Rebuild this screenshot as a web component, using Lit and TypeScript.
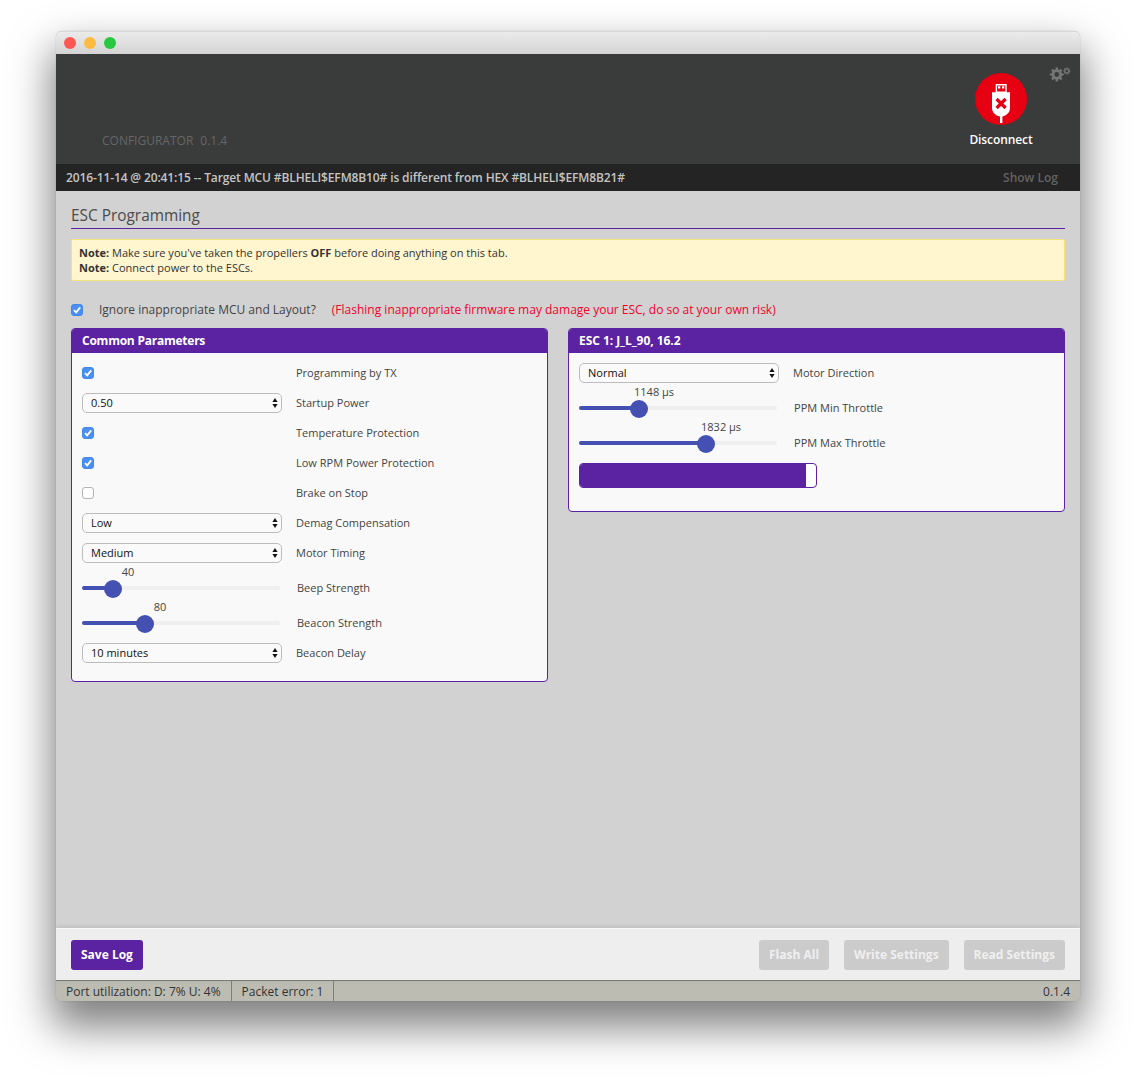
import { LitElement, html, css, svg } from "lit";
import { customElement } from "lit/decorators.js";

type Row =
  | { kind: "check"; checked: boolean; label: string }
  | { kind: "select"; value: string; label: string }
  | { kind: "slider"; pos: number; value: string; label: string };

const COMMON: Row[] = [
  { kind: "check", checked: true, label: "Programming by TX" },
  { kind: "select", value: "0.50", label: "Startup Power" },
  { kind: "check", checked: true, label: "Temperature Protection" },
  { kind: "check", checked: true, label: "Low RPM Power Protection" },
  { kind: "check", checked: false, label: "Brake on Stop" },
  { kind: "select", value: "Low", label: "Demag Compensation" },
  { kind: "select", value: "Medium", label: "Motor Timing" },
  { kind: "slider", pos: 31, value: "40", label: "Beep Strength" },
  { kind: "slider", pos: 63, value: "80", label: "Beacon Strength" },
  { kind: "select", value: "10 minutes", label: "Beacon Delay" },
];

const ESC: Row[] = [
  { kind: "select", value: "Normal", label: "Motor Direction" },
  { kind: "slider", pos: 60, value: "1148 µs", label: "PPM Min Throttle" },
  { kind: "slider", pos: 127, value: "1832 µs", label: "PPM Max Throttle" },
];

const tick = svg`<svg viewBox="0 0 12 12" width="12" height="12"><path d="M3 6.2 L5.2 8.4 L9.2 3.4" fill="none" stroke="#fff" stroke-width="1.8"/></svg>`;
const stepper = svg`<svg class="stepper" viewBox="0 0 6 12" width="6" height="12"><path d="M3 1 L5.6 5 H0.4 Z M3 11 L0.4 7 H5.6 Z" fill="#111"/></svg>`;

function gearPath(cx: number, cy: number, outer: number, root: number, hole: number, teeth: number): string {
  const pts: string[] = [];
  const step = (Math.PI * 2) / teeth;
  for (let i = 0; i < teeth; i++) {
    const a = i * step - Math.PI / 2;
    const w = step * 0.24;
    const corners: [number, number][] = [
      [root, a - w * 1.35],
      [outer, a - w * 0.85],
      [outer, a + w * 0.85],
      [root, a + w * 1.35],
    ];
    for (const [r, t] of corners) {
      pts.push(`${(cx + r * Math.cos(t)).toFixed(2)} ${(cy + r * Math.sin(t)).toFixed(2)}`);
    }
  }
  const ring = `M${cx - hole} ${cy} a${hole} ${hole} 0 1 0 ${hole * 2} 0 a${hole} ${hole} 0 1 0 ${-hole * 2} 0 Z`;
  return `M${pts.join(" L")} Z ${ring}`;
}

@customElement("app-root")
export class AppRoot extends LitElement {
  static styles = css`
    :host { display: block; height: 1081px; overflow: hidden; background: #fff; font-family: "Open Sans", "DejaVu Sans", sans-serif; font-size: 11px; color: #444; }
    * { box-sizing: border-box; }
    .page { padding: 31px 56px 0; }
    .window { width: 1024px; height: 970px; display: flex; flex-direction: column; border-radius: 6px 6px 5px 5px; overflow: hidden; box-shadow: 0 22px 42px 4px rgba(0,0,0,.5), 0 0 1px rgba(0,0,0,.35); background: #d2d2d2; }
    .titlebar { height: 23px; flex: none; display: flex; align-items: center; gap: 8px; padding-left: 8px; background: linear-gradient(#ebebeb, #d4d4d4); border-top: 1px solid #d8d8d8; }
    .light { width: 12px; height: 12px; border-radius: 50%; }
    .red { background: #fc5753; } .amber { background: #fdbc40; } .green { background: #28c840; }
    .header { height: 110px; flex: none; background: #3a3b3b; position: relative; }
    .version { padding: 79px 0 0 46px; font-size: 12px; line-height: 16px; color: #666767; display: flex; gap: 7px; }
    .connect { position: absolute; left: 904px; top: 19px; width: 82px; display: flex; flex-direction: column; align-items: center; }
    .connect-label { margin-top: 6px; font-size: 12px; line-height: 17px; font-weight: 600; color: #fff; letter-spacing: -.1px; }
    .gears { position: absolute; left: 992.5px; top: 10.5px; }
    .logbar { height: 27px; flex: none; background: #242424; color: #c4c4c4; font-size: 12px; font-weight: 600; display: flex; justify-content: space-between; align-items: center; padding: 0 22px 1px 10px; }
    .logtext { letter-spacing: -.125px; }
    .showlog { color: #626262; }
    .content { flex: 1; display: flex; flex-direction: column; padding: 14px 15px 0; background: #d2d2d2; }
    .title { font-size: 15.4px; line-height: 22px; color: #4b4b4b; height: 24px; border-bottom: 1px solid #5b22a1; }
    .note { margin-top: 10px; height: 42px; padding: 5px 7px; background: #fff6cf; border: 1px solid #f6e07c; border-radius: 2px; color: #333; line-height: 15px; }
    .ignore { margin-top: 20px; height: 18px; display: flex; align-items: center; font-size: 12px; color: #444; }
    .ignore span:not(.box) { margin-bottom: 2px; }
    .ignore .box { margin-right: 16px; }
    .ignore .warn { margin-left: 16px; color: #f4002b; }
    .cols { margin-top: 9px; display: flex; align-items: flex-start; gap: 20px; }
    .panel { background: #f9f9f9; border: 1px solid #5b22a1; border-radius: 4px; overflow: hidden; }
    .panel.left { flex: 477 0 0; padding-bottom: 13px; }
    .panel.right { flex: 497 0 0; padding-bottom: 23px; }
    .panel-head { height: 25px; margin: -1px -1px 0; background: #5b22a1; color: #fff; font-size: 12px; font-weight: 700; line-height: 26px; padding: 0 11px; }
    .panel.left .panel-head { letter-spacing: -.24px; }
    .panel.right .panel-head { letter-spacing: -.05px; }
    .body { padding: 5px 10px 0; }
    .row { display: flex; align-items: center; height: 30px; }
    .row.slider-row { height: 35px; align-items: flex-start; }
    .control { width: 200px; flex: none; display: flex; align-items: center; }
    .label { margin-left: 14px; padding-bottom: 2px; }
    .box { width: 12px; height: 12px; flex: none; border-radius: 3px; display: flex; background: #fff; border: 1px solid #b4b4b4; }
    .box.on { background: #4a90f2; border-color: #4287ea; }
    .box svg { margin: -1px; }
    .select { width: 200px; height: 20px; border: 1px solid #bcbcbc; border-radius: 5px; background: #fafafa; color: #111; padding-left: 8px; line-height: 18px; position: relative; }
    .stepper { position: absolute; right: 3px; top: 3px; }
    .slider { position: relative; width: 198px; height: 35px; flex: none; }
    .track { position: absolute; left: 0; right: 0; top: 18px; height: 4px; border-radius: 2px; background: #efefef; }
    .fill { position: absolute; left: 0; top: 18px; height: 4px; border-radius: 2px; background: #4450b2; }
    .thumb { position: absolute; top: 12px; width: 18px; height: 18px; margin-left: -9px; border-radius: 50%; background: #4450b2; }
    .value { position: absolute; top: -4px; transform: translateX(-50%); margin-left: 15px; white-space: nowrap; line-height: 15px; color: #444; }
    .slider-row .label { margin-left: 17px; margin-top: 12px; padding-bottom: 0; line-height: 16px; }
    .progress { margin-top: 5px; width: 238px; height: 25px; border: 1px solid #5b22a1; border-radius: 4px; background: #fff; overflow: hidden; }
    .progress div { width: 226px; height: 100%; background: #5b22a1; }
    .footer { height: 52px; flex: none; background: #eeeeee; border-top: 1px solid #f7f7f7; display: flex; align-items: center; padding: 0 15px; gap: 15px; box-shadow: 0 -1px 5px rgba(0,0,0,.12); position: relative; }
    .btn { height: 30px; padding: 0 10px; border-radius: 3px; font-size: 12px; font-weight: 700; line-height: 29px; color: #fff; }
    .btn.save { background: #5b22a1; margin-right: auto; }
    .btn.off { background: #cbcbcb; color: #efefef; }
    .status { height: 21px; flex: none; background: #bcbcb2; border-top: 1px solid #7e7e7a; display: flex; align-items: center; color: #333; font-size: 12px; }
    .cell { height: 100%; padding: 0 10px; border-right: 1px solid #7e7e7a; line-height: 21px; }
    .ver { margin-left: auto; padding-right: 10px; line-height: 21px; }
  `;

  private box(on: boolean) {
    return html`<span class="box ${on ? "on" : ""}">${on ? tick : ""}</span>`;
  }

  private row(r: Row) {
    if (r.kind === "slider") {
      return html`<div class="row slider-row">
        <div class="slider">
          <div class="track"></div>
          <div class="fill" style="width:${r.pos}px"></div>
          <div class="thumb" style="left:${r.pos}px"></div>
          <div class="value" style="left:${r.pos}px">${r.value}</div>
        </div>
        <div class="label">${r.label}</div>
      </div>`;
    }
    return html`<div class="row">
      <div class="control">
        ${r.kind === "check"
          ? this.box(r.checked)
          : html`<div class="select">${r.value}${stepper}</div>`}
      </div>
      <div class="label">${r.label}</div>
    </div>`;
  }

  render() {
    return html`<div class="page">
      <div class="window">
        <div class="titlebar">
          <span class="light red"></span><span class="light amber"></span><span class="light green"></span>
        </div>
        <div class="header">
          <div class="version"><span>CONFIGURATOR</span><span>0.1.4</span></div>
          <div class="connect">
            <svg width="52" height="52" viewBox="0 0 52 52">
              <circle cx="26" cy="26" r="26" fill="#e60012"/>
              <path d="M21.4 11.7 H31 V19.3 H21.4 Z" fill="none" stroke="#fff" stroke-width="1.4"/>
              <path d="M23 13.2 H25.3 V15.4 H23 Z M27 13.2 H29.3 V15.4 H27 Z" fill="#fff"/>
              <path d="M17 19.3 H35 V35 C35 39.5 31.5 42.5 27.4 43.6 V50 H25 V43.6 C20.5 42.5 17 39.5 17 35 Z" fill="#fff"/>
              <path d="M21.6 26 L30.6 35 M30.6 26 L21.6 35" stroke="#e60012" stroke-width="3.2"/>
            </svg>
            <div class="connect-label">Disconnect</div>
          </div>
          <svg class="gears" width="24" height="20" viewBox="0 0 24 20">
            <path d=${gearPath(7.8, 9.5, 7, 5.2, 2.4, 8)} fill="#757575" fill-rule="evenodd"/>
            <path d=${gearPath(17.8, 6, 3.6, 2.7, 1.4, 8)} fill="#757575" fill-rule="evenodd"/>
          </svg>
        </div>
        <div class="logbar">
          <span class="logtext">2016-11-14 @ 20:41:15 -- Target MCU #BLHELI$EFM8B10# is different from HEX #BLHELI$EFM8B21#</span>
          <span class="showlog">Show Log</span>
        </div>
        <div class="content">
          <div class="title">ESC Programming</div>
          <div class="note">
            <b>Note:</b> Make sure you've taken the propellers <b>OFF</b> before doing anything on this tab.<br />
            <b>Note:</b> Connect power to the ESCs.
          </div>
          <div class="ignore">
            ${this.box(true)}
            <span>Ignore inappropriate MCU and Layout?</span>
            <span class="warn">(Flashing inappropriate firmware may damage your ESC, do so at your own risk)</span>
          </div>
          <div class="cols">
            <section class="panel left">
              <div class="panel-head">Common Parameters</div>
              <div class="body">${COMMON.map((r) => this.row(r))}</div>
            </section>
            <section class="panel right">
              <div class="panel-head">ESC 1: J_L_90, 16.2</div>
              <div class="body">
                ${ESC.map((r) => this.row(r))}
                <div class="progress"><div></div></div>
              </div>
            </section>
          </div>
        </div>
        <div class="footer">
          <div class="btn save">Save Log</div>
          <div class="btn off">Flash All</div>
          <div class="btn off">Write Settings</div>
          <div class="btn off">Read Settings</div>
        </div>
        <div class="status">
          <div class="cell">Port utilization: D: 7% U: 4%</div>
          <div class="cell">Packet error: 1</div>
          <div class="ver">0.1.4</div>
        </div>
      </div>
    </div>`;
  }
}
